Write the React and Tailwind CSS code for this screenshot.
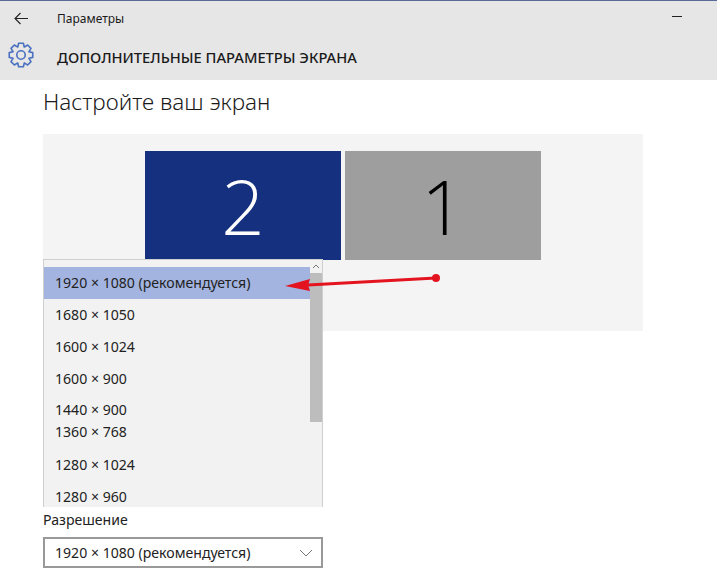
import React from 'react'

const rows = [
  { label: '1680 × 1050', cls: '' },
  { label: '1600 × 1024', cls: '' },
  { label: '1600 × 900', cls: '' },
  { label: '1440 × 900', cls: 'pb-[2px] -mb-[10px]' },
  { label: '1360 × 768', cls: 'pb-[2px]' },
  { label: '1280 × 1024', cls: '' },
  { label: '1280 × 960', cls: '' },
]

// eight teeth, flat top with a narrow notch between them
function gearPath() {
  const pts = []
  for (let i = 0; i < 8; i++) {
    const a = (i * Math.PI) / 4 - Math.PI / 2
    const steps = [[8.6, -0.39], [12, -0.2], [12, 0.2], [8.6, 0.39]]
    steps.forEach(([r, off]) => {
      pts.push(`${(13 + r * Math.cos(a + off)).toFixed(2)} ${(13 + r * Math.sin(a + off)).toFixed(2)}`)
    })
  }
  return 'M' + pts.join('L') + 'Z'
}

function Gear() {
  return (
    <svg width="26" height="26" viewBox="0 0 26 26" fill="none" stroke="#4a70c0" strokeWidth="1.6" strokeLinejoin="round">
      <path d={gearPath()} />
      <circle cx="13" cy="13" r="4.2" />
    </svg>
  )
}

export default function App() {
  return (
    <div className="w-[717px] h-[575px] overflow-hidden bg-white text-[#1a1a1a] font-['Noto_Sans','Open_Sans',sans-serif]">
      <div className="h-20 bg-[#e6e6e6] border-t border-[#5a6a9a]">
        <div className="h-[35px] flex items-center text-xs">
          <svg className="ml-[14px]" width="15" height="13" viewBox="0 0 15 13" fill="none" stroke="#222" strokeWidth="1.1">
            <path d="M14 6.500H1M6.500 1L1 6.500 6.500 12" />
          </svg>
          <span className="ml-[28px]">Параметры</span>
          <div className="ml-auto mr-[35px] mb-[4px] w-[10px] h-px bg-[#222]" />
        </div>
        <div className="h-11 flex items-center pb-[6px]">
          <div className="ml-[8px]"><Gear /></div>
          <span className="ml-[23px] mt-[4px] text-[14.7px] font-medium">ДОПОЛНИТЕЛЬНЫЕ ПАРАМЕТРЫ ЭКРАНА</span>
        </div>
      </div>

      <div className="pl-[43px]">
        <h1 className="h-[54px] pt-[5px] text-[22.500px] font-light">Настройте ваш экран</h1>

        <div className="relative w-[600px] h-[197px] bg-[#f4f4f4]">
          <div className="flex gap-1 pt-[17px] pl-[102px]">
            <div className="w-[196px] h-[109px] bg-[#14307f] text-white flex items-center justify-center text-[76px] font-light font-['Open_Sans',sans-serif]">2</div>
            <div className="w-[196px] h-[109px] bg-[#9e9e9e] text-black flex items-center justify-center text-[76px] font-light font-['Open_Sans',sans-serif]">1</div>
          </div>

          <div className="absolute left-0 top-[125px] w-[280px] h-[248px] bg-[#f2f2f2] border-x border-t border-[#cfcfcf] overflow-hidden text-[14.100px] text-[#222]">
            <div className="flex">
              <div className="w-[266px]">
                <div className="h-[7px]" />
                <div className="h-8 flex items-center pl-[11px] bg-[#a3b4e0]">1920 × 1080 (рекомендуется)</div>
                {rows.map(r => (
                  <div key={r.label} className={`h-8 flex items-center pl-[11px] ${r.cls}`}>{r.label}</div>
                ))}
              </div>
              <div className="w-[12px] flex flex-col">
                <div className="h-[13px] flex items-center justify-center bg-[#f2f2f2]">
                  <svg width="8" height="5" viewBox="0 0 8 5" fill="none" stroke="#777"><path d="M1 4l3-3 3 3" /></svg>
                </div>
                <div className="h-[149px] bg-[#bdbdbd]" />
              </div>
            </div>
          </div>

          <svg className="absolute left-[240px] top-[135px]" width="165" height="30" viewBox="0 0 165 30">
            <path d="M153 9L25 16" stroke="#e3141f" strokeWidth="3" />
            <path d="M2 17L27 10L25 16L27 22Z" fill="#e3141f" />
            <circle cx="153" cy="9" r="4" fill="#e3141f" />
          </svg>
        </div>

        <div className="mt-[179px] h-5 text-[14.100px] text-[#222] flex items-center">Разрешение</div>
        <div className="mt-[7px] w-[280px] h-[31px] border-2 border-[#999] flex items-center pl-[10px] text-[14.100px] text-[#222]">
          1920 × 1080 (рекомендуется)
          <svg className="ml-auto mr-[8px]" width="14" height="8" viewBox="0 0 14 8" fill="none" stroke="#777"><path d="M1 1l6 6 6-6" /></svg>
        </div>
      </div>
    </div>
  )
}
